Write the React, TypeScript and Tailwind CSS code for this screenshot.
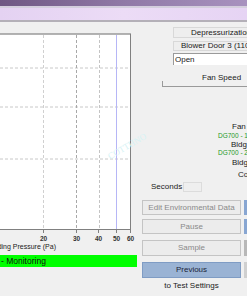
const font = { fontFamily: '"Liberation Sans", Arial, sans-serif' };

function Chart() {
  const vlines = [
    { x: 43, c: "#d0d0d0" },
    { x: 76, c: "#a8a8a8" },
    { x: 99, c: "#c4c4c4" },
  ];
  const hlines = [35, 74, 126];
  const ticks = [
    { x: 43, t: "20" },
    { x: 76, t: "30" },
    { x: 98, t: "40" },
    { x: 116, t: "50" },
    { x: 130, t: "60" },
  ];
  return (
    <svg width="137" height="220" viewBox="0 0 137 220" className="block">
      <rect x="0" y="1" width="130.5" height="195.5" fill="#ffffff" />
      <line x1="0" y1="1" x2="131" y2="1" stroke="#9a9a9a" strokeWidth="1.5" />
      {hlines.map((y) => (
        <line key={y} x1="0" y1={y} x2="130" y2={y} stroke="#c8c8c8" strokeDasharray="3 2" />
      ))}
      {vlines.map((v) => (
        <line key={v.x} x1={v.x + 0.5} y1="2" x2={v.x + 0.5} y2="196" stroke={v.c} strokeDasharray="3 2" />
      ))}
      <line x1="116.5" y1="2" x2="116.5" y2="196" stroke="#b6b6f6" />
      <line x1="130.5" y1="1" x2="130.5" y2="196.5" stroke="#808080" />
      <line x1="0" y1="196.5" x2="131" y2="196.5" stroke="#808080" />
      {ticks.map((t) => (
        <g key={t.t}>
          <line x1={t.x + 0.5} y1="196" x2={t.x + 0.5} y2="200" stroke="#808080" />
          <text x={t.x + 0.5} y="208" fontSize="6.5" fontWeight="bold" textAnchor="middle" fill="#333" style={font}>
            {t.t}
          </text>
        </g>
      ))}
      <text x="56" y="216" fontSize="7" textAnchor="end" fill="#1a1a1a" style={font}>
        Building Pressure (Pa)
      </text>
    </svg>
  );
}

function Btn({ label, active, sliver }: { label: string; active?: boolean; sliver: string }) {
  return (
    <div className="flex items-stretch h-full">
      <div
        className={
          active
            ? "ml-[5px] w-[99px] flex items-center justify-center border border-[#7f9cc4] bg-[#9ab3d4] text-[#1c2438] text-[8px]"
            : "ml-[5px] w-[99px] flex items-center justify-center border border-[#c4c4c4] bg-[#ececec] text-[#8a8a8a] text-[8px]"
        }
      >
        {label}
      </div>
      <div className="ml-[3px] w-[3px]" style={{ background: sliver }} />
    </div>
  );
}

export default function App() {
  return (
    <div className="w-[247px] h-[296px] overflow-hidden bg-[#f0f0f0] relative flex flex-col" style={font}>
      <div className="h-[6px] bg-gradient-to-r from-[#6f5783] via-[#9079a6] to-[#a892bf]" />
      <div className="h-[2px] bg-[#d4cedd]" />
      <div className="h-[12px] bg-gradient-to-r from-[#e4d2f2] via-[#ecdcf6] to-[#e6d4f4]" />
      <div className="h-[2px] bg-[#b4b0b8]" />

      <div className="flex flex-1">
        <div className="w-[137px] flex flex-col">
          <div className="mt-[11px]">
            <Chart />
          </div>
          <div className="mt-[2px] h-[12px] bg-[#00ff00] text-[8.5px] leading-[12px] text-[#111] whitespace-nowrap pl-[1px]">
            - Monitoring
          </div>
        </div>

        <div className="flex-1 flex flex-col text-[8px] text-[#1a1a1a] whitespace-nowrap">
          <div className="mt-[5px] ml-[36px] h-[11px] w-[80px] border border-[#d8d8d8] bg-[#eeeeee] pl-[17px] leading-[9px]">
            Depressurization
          </div>
          <div className="mt-[3px] ml-[36px] h-[10px] w-[80px] border border-[#d8d8d8] bg-[#eeeeee] pl-[7px] leading-[8px]">
            Blower Door 3 (110)
          </div>
          <div className="mt-[2px] ml-[36px] h-[12px] w-[80px] border-t border-l border-[#9a9a9a] bg-white pl-[1px] leading-[11px]">
            Open
          </div>
          <div className="mt-[8px] ml-[65px] h-[10px] leading-[10px]">Fan Speed</div>
          <div className="mt-[-2px] ml-[25px] h-[6px] border-l border-b border-[#9a9a9a]" />

          <div className="mt-[35px] ml-[95px] h-[9px] leading-[9px]">Fan Pressure</div>
          <div className="mt-[1px] ml-[81px] h-[8px] leading-[8px] text-[6.5px] text-[#1e9a1e]">DG700 - 1</div>
          <div className="ml-[94px] h-[9px] leading-[9px]">Bldg Pressure</div>
          <div className="ml-[81px] h-[8px] leading-[8px] text-[6.5px] text-[#1e9a1e]">DG700 - 2</div>
          <div className="mt-[1px] ml-[95px] h-[9px] leading-[9px]">Bldg Pressure</div>
          <div className="mt-[3px] ml-[101px] h-[9px] leading-[9px]">Count</div>

          <div className="mt-[3px] h-[10px] flex items-center">
            <span className="ml-[14px] w-[32px] leading-[10px]">Seconds</span>
            <span className="w-[19px] h-[10px] border border-[#dcdcdc] bg-[#efefef]" />
          </div>

          <div className="mt-[8px] h-[15px]">
            <Btn label="Edit Environmental Data" sliver="#88a6d2" />
          </div>
          <div className="mt-[4px] h-[15px]">
            <Btn label="Pause" sliver="#88a6d2" />
          </div>
          <div className="mt-[6px] h-[16px]">
            <Btn label="Sample" sliver="#b8b8b8" />
          </div>
          <div className="mt-[6px] h-[16px]">
            <Btn label="Previous" active sliver="#d0d0d0" />
          </div>
          <div className="mt-[3px] ml-[5px] w-[99px] h-[10px] leading-[10px] text-center">to Test Settings</div>
        </div>
      </div>

      <div
        className="absolute left-[106px] top-[140px] text-[9px] text-[#d6f3f5] -rotate-[30deg] pointer-events-none"
        style={{ fontFamily: '"Liberation Serif", serif' }}
      >
        COTTHNO
      </div>
    </div>
  );
}
